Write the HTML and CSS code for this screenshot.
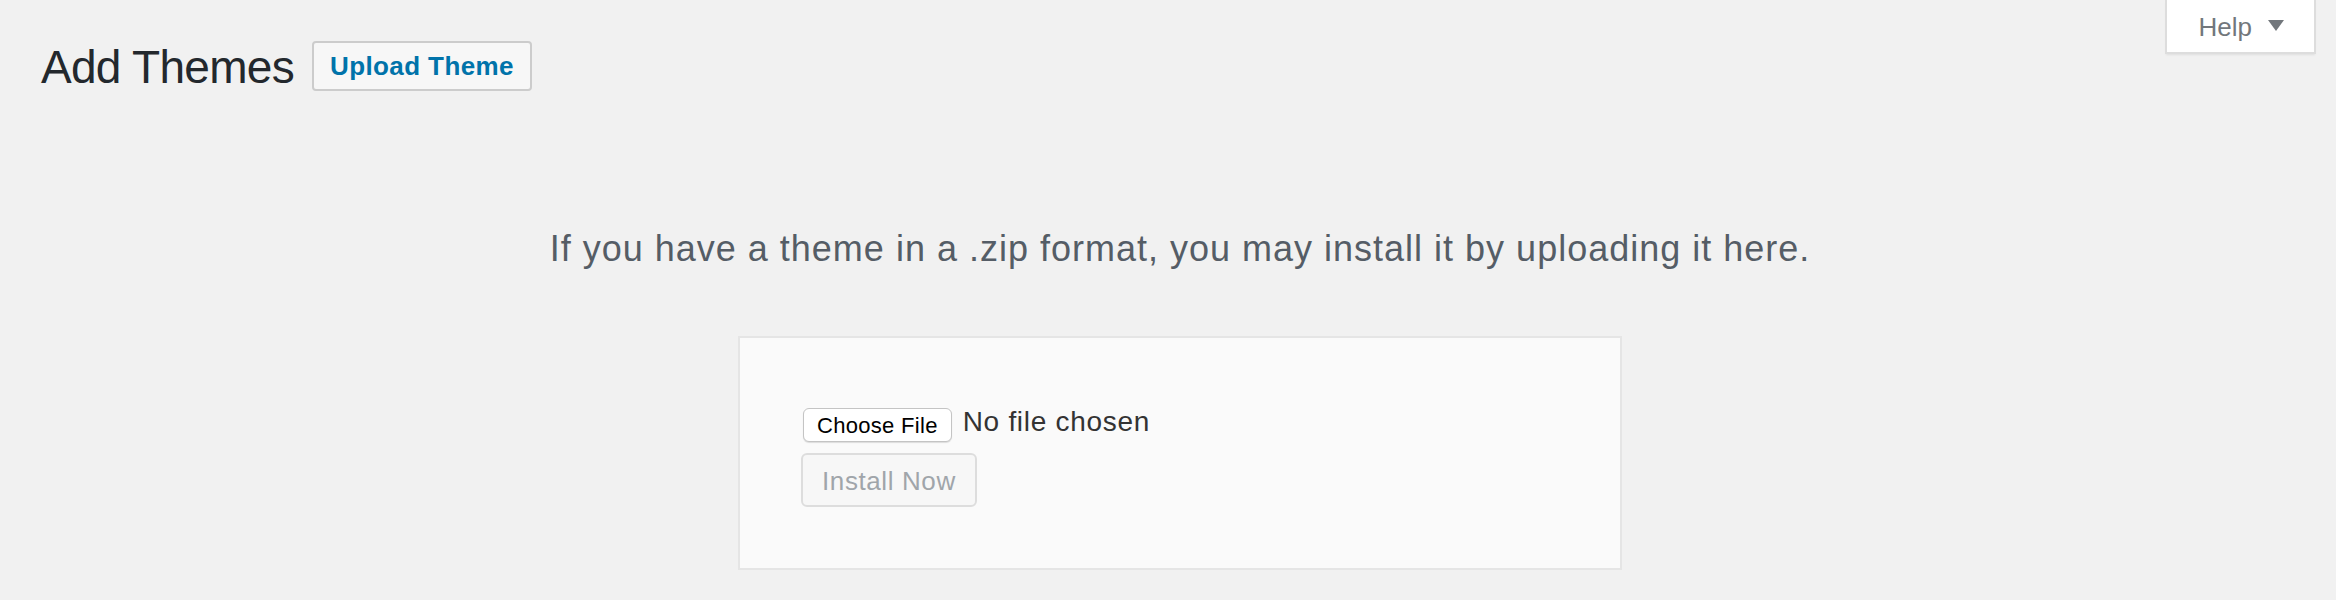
FILE: index.html
```html
<!DOCTYPE html>
<html lang="en">
<head>
<meta charset="utf-8">
<title>Add Themes</title>
<link rel="stylesheet" href="styles.css">
</head>
<body>
<div class="topbar">
  <div class="title-row">
    <h1 class="title">Add Themes</h1>
    <a class="btn-upload" href="#">Upload Theme</a>
  </div>
  <div class="help-tab">
    <span class="help-label">Help</span>
    <svg class="help-arrow" width="16" height="12" viewBox="0 0 16 12" aria-hidden="true"><polygon points="0,0 16,0 8,11" fill="#72777c"/></svg>
  </div>
</div>
<div class="upload">
  <p class="install-help">If you have a theme in a .zip format, you may install it by uploading it here.</p>
  <form class="upload-form">
    <div class="file-row">
      <span class="file-btn">Choose File</span>
      <span class="file-name">No file chosen</span>
    </div>
    <div class="submit-row">
      <span class="btn-install">Install Now</span>
    </div>
  </form>
</div>
</body>
</html>
```
FILE: styles.css
```css
html, body {
  margin: 0;
  padding: 0;
}
body {
  background: #f1f1f1;
  font-family: "Liberation Sans", Arial, sans-serif;
  color: #444;
}
.topbar {
  display: flex;
  justify-content: space-between;
  align-items: flex-start;
  padding-right: 20px;
}
.title-row {
  display: flex;
  align-items: flex-start;
  margin-top: 19px;
  padding-left: 41px;
}
.title {
  margin: 0;
  padding: 18px 0 8px;
  font-size: 46px;
  line-height: 60px;
  font-weight: 400;
  letter-spacing: -0.7px;
  color: #23282d;
}
.btn-upload {
  margin: 22px 0 0 18px;
  padding: 8px 16px;
  border: 2px solid #cccccc;
  border-radius: 4px;
  background: #f7f7f7;
  color: #0073aa;
  font-size: 26px;
  line-height: 30px;
  font-weight: 700;
  letter-spacing: 0.4px;
  text-decoration: none;
}
.help-tab {
  display: flex;
  align-items: flex-start;
  box-sizing: border-box;
  height: 54px;
  padding: 3px 30px 0 32px;
  background: #ffffff;
  border: 2px solid #dddddd;
  border-top: none;
  box-shadow: 0 2px 2px -1px rgba(0, 0, 0, 0.08);
  color: #72777c;
}
.help-label {
  font-size: 26px;
  line-height: 49px;
}
.help-arrow {
  display: block;
  margin: 17px 0 0 16px;
}
.upload {
  margin-left: 24px;
  text-align: center;
}
.install-help {
  margin: 117px 0 0;
  font-size: 36px;
  line-height: 54px;
  letter-spacing: 1px;
  color: #555d66;
}
.upload-form {
  box-sizing: border-box;
  width: 884px;
  margin: 60px auto 0;
  padding: 60px 60px 61px;
  background: #fafafa;
  border: 2px solid #e5e5e5;
  text-align: left;
}
.file-row {
  display: flex;
  align-items: flex-start;
  padding-top: 10px;
}
.file-btn {
  box-sizing: border-box;
  height: 34px;
  margin-left: 3px;
  padding: 2px 13px 0;
  border: 1px solid #c4c4c4;
  border-radius: 6px;
  background: #ffffff;
  box-shadow: 0 1px 1px rgba(0, 0, 0, 0.12);
  color: #000000;
  font-size: 22px;
  line-height: 30px;
  letter-spacing: 0.3px;
}
.file-name {
  margin-left: 11px;
  font-size: 28px;
  line-height: 28px;
  letter-spacing: 0.7px;
  color: #333333;
}
.submit-row {
  margin-top: 11px;
  display: flex;
}
.btn-install {
  margin-left: 1px;
  padding: 2px 19px 0;
  border: 2px solid #dddddd;
  border-radius: 6px;
  background: #f7f7f7;
  color: #a0a5aa;
  font-size: 26px;
  line-height: 48px;
  letter-spacing: 0.6px;
}
```
